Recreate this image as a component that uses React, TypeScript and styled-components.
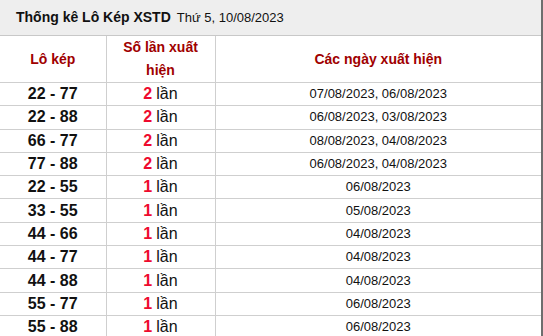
import React from "react";
import styled, { createGlobalStyle } from "styled-components";

const Global = createGlobalStyle`
  html, body { margin: 0; padding: 0; background: #fff; overflow: hidden; }
  body { font-family: "Liberation Sans", Arial, sans-serif; }
`;

const Frame = styled.div`
  width: 541px;
  border-right: 2px solid #6e6e6e;
  background: #fff;
`;

const TitleBar = styled.div`
  box-sizing: border-box;
  height: 36px;
  display: flex;
  align-items: center;
  padding: 0 0 1px 16px;
  background: #eeeeee;
  border-bottom: 1px solid #c8c8c8;
  color: #111;
`;

const TitleStrong = styled.strong`
  font-size: 14px;
  font-weight: bold;
  margin-right: 6px;
`;

const TitleDate = styled.span`
  font-size: 13px;
`;

const Table = styled.table`
  width: 541px;
  border-collapse: collapse;
  table-layout: fixed;
`;

const HeadCell = styled.th`
  box-sizing: border-box;
  height: 45px;
  padding: 0 6px;
  color: #a00000;
  font-size: 14px;
  font-weight: bold;
  line-height: 23px;
  text-align: center;
  border-right: 1px solid #cfcfcf;
  border-bottom: 1px solid #cfcfcf;
  &:last-child { border-right: none; }
`;

const Row = styled.tr`
  height: 23.3px;
  border-bottom: 1px solid #cfcfcf;
`;

const Cell = styled.td<{ $kind: "pair" | "count" | "dates" }>`
  padding: 0;
  text-align: center;
  vertical-align: middle;
  line-height: 20px;
  color: #111;
  border-right: 1px solid #cfcfcf;
  font-size: ${(p) => (p.$kind === "dates" ? "13px" : "16px")};
  font-weight: ${(p) => (p.$kind === "pair" ? "bold" : "normal")};
  &:last-child { border-right: none; }
`;

const Count = styled.span`
  color: #ee0a2e;
  font-weight: bold;
  margin-right: 4px;
`;

const rows: [string, number, string][] = [
  ["22 - 77", 2, "07/08/2023, 06/08/2023"],
  ["22 - 88", 2, "06/08/2023, 03/08/2023"],
  ["66 - 77", 2, "08/08/2023, 04/08/2023"],
  ["77 - 88", 2, "06/08/2023, 04/08/2023"],
  ["22 - 55", 1, "06/08/2023"],
  ["33 - 55", 1, "05/08/2023"],
  ["44 - 66", 1, "04/08/2023"],
  ["44 - 77", 1, "04/08/2023"],
  ["44 - 88", 1, "04/08/2023"],
  ["55 - 77", 1, "06/08/2023"],
  ["55 - 88", 1, "06/08/2023"],
];

export default function App() {
  return (
    <>
      <Global />
      <Frame>
        <TitleBar>
          <TitleStrong>Thống kê Lô Kép XSTD</TitleStrong>
          <TitleDate>Thứ 5, 10/08/2023</TitleDate>
        </TitleBar>
        <Table>
          <colgroup>
            <col style={{ width: 106 }} />
            <col style={{ width: 109 }} />
            <col style={{ width: 326 }} />
          </colgroup>
          <thead>
            <tr>
              <HeadCell>Lô kép</HeadCell>
              <HeadCell>Số lần xuất hiện</HeadCell>
              <HeadCell>Các ngày xuất hiện</HeadCell>
            </tr>
          </thead>
          <tbody>
            {rows.map(([pair, n, dates]) => (
              <Row key={pair}>
                <Cell $kind="pair">{pair}</Cell>
                <Cell $kind="count">
                  <Count>{n}</Count>lần
                </Cell>
                <Cell $kind="dates">{dates}</Cell>
              </Row>
            ))}
          </tbody>
        </Table>
      </Frame>
    </>
  );
}
